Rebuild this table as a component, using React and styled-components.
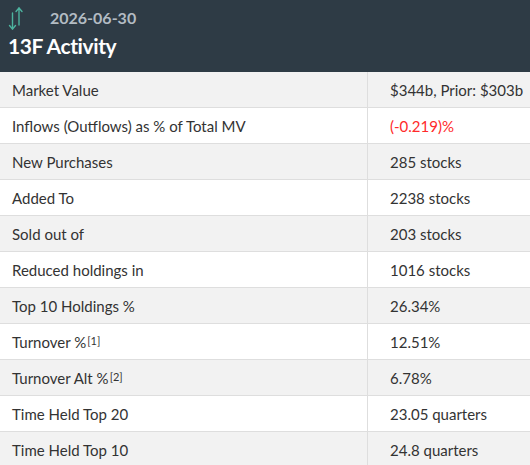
import React from "react";
import styled, { createGlobalStyle } from "styled-components";

const Global = createGlobalStyle`
  html, body { margin: 0; padding: 0; background: #fff; }
  body { font-family: "Lato", "Open Sans", sans-serif; }
`;

const Panel = styled.div`
  width: 530px;
`;

const Header = styled.div`
  background: #2e3b45;
  height: 72px;
  box-sizing: border-box;
  padding: 4px 8px 0 8px;
  display: flex;
  flex-direction: column;
`;

const TopLine = styled.div`
  display: flex;
  align-items: center;
  height: 26px;
`;

const DateText = styled.span`
  margin-left: 18px;
  color: #b3bcc3;
  font-size: 16px;
  font-weight: 700;
`;

const Title = styled.h1`
  margin: 3px 0 0 0;
  color: #fff;
  font-size: 21px;
  font-weight: 700;
  letter-spacing: -0.4px;
`;

const Table = styled.div`
  display: grid;
  grid-template-columns: 367px 1fr;
`;

const Cell = styled.div`
  height: 36px;
  box-sizing: border-box;
  display: flex;
  align-items: center;
  padding-left: ${(p) => (p.$right ? "22px" : "12px")};
  background: ${(p) => (p.$alt ? "#f2f2f2" : "#ffffff")};
  border-bottom: 1px solid #dedede;
  border-left: ${(p) => (p.$right ? "1px solid #dedede" : "none")};
  color: ${(p) => (p.$red ? "#ff2a2a" : "#333")};
  font-size: 15px;
`;

const Sup = styled.sup`
  font-size: 11px;
  line-height: 0;
  position: relative;
  top: -1px;
  margin-left: 1px;
`;

const SwapIcon = () => (
  <svg width="24" height="26" viewBox="0 0 24 26" fill="none" stroke="#4db39f" strokeWidth="1.4" strokeLinecap="round" strokeLinejoin="round">
    <path d="M11 4 V21" />
    <path d="M8 7.5 L11 4 L14 7.5" />
    <path d="M4.5 9 V25" />
    <path d="M1.5 21.5 L4.5 25 L7.5 21.5" />
  </svg>
);

const rows = [
  ["Market Value", "$344b, Prior: $303b"],
  ["Inflows (Outflows) as % of Total MV", "(-0.219)%", true],
  ["New Purchases", "285 stocks"],
  ["Added To", "2238 stocks"],
  ["Sold out of", "203 stocks"],
  ["Reduced holdings in", "1016 stocks"],
  ["Top 10 Holdings %", "26.34%"],
  [<>Turnover %<Sup>[1]</Sup></>, "12.51%"],
  [<>Turnover Alt %<Sup>[2]</Sup></>, "6.78%"],
  ["Time Held Top 20", "23.05 quarters"],
  ["Time Held Top 10", "24.8 quarters"],
];

export default function App() {
  return (
    <>
      <Global />
      <Panel>
        <Header>
          <TopLine>
            <SwapIcon />
            <DateText>2026-06-30</DateText>
          </TopLine>
          <Title>13F Activity</Title>
        </Header>
        <Table>
          {rows.map(([l, r, red], i) => (
            <React.Fragment key={i}>
              <Cell $alt={i % 2 === 0}>{l}</Cell>
              <Cell $alt={i % 2 === 0} $right $red={red}>{r}</Cell>
            </React.Fragment>
          ))}
        </Table>
      </Panel>
    </>
  );
}
